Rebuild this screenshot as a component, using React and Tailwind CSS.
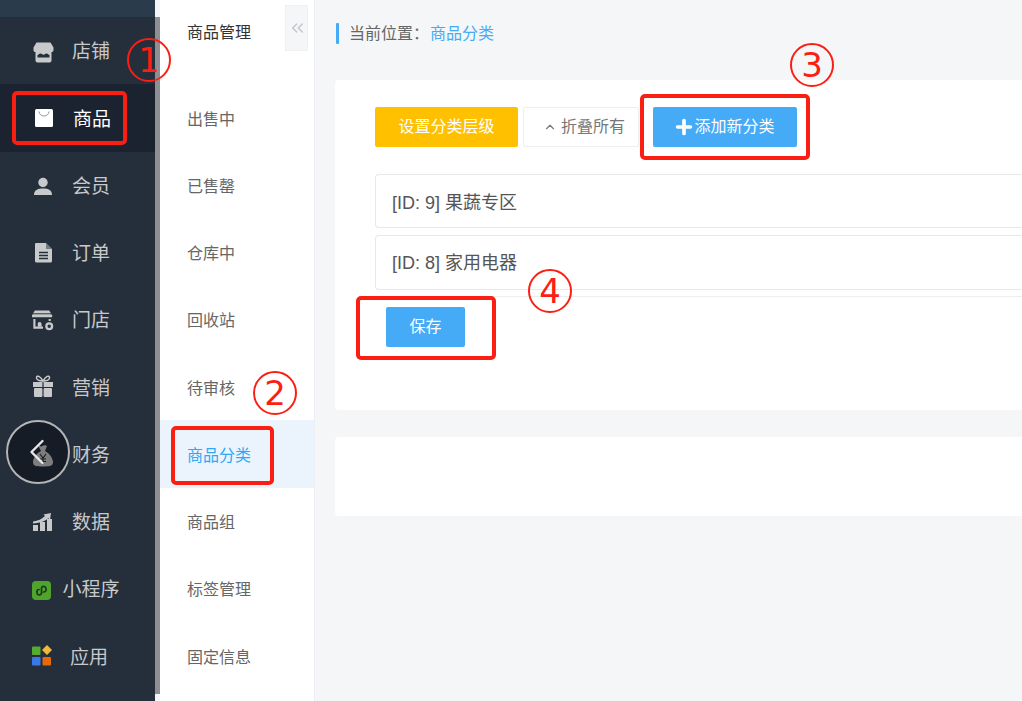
import React from 'react';
import { ChevronLeft, ChevronsLeft, ChevronUp, Plus } from 'lucide-react';

const fontStack = { fontFamily: '"Liberation Sans", "Noto Sans CJK SC", sans-serif' };

const ShopIcon = () => (
  <svg width="22" height="24" viewBox="0 0 22 24" fill="#c8c9cb">
    <g transform="translate(0.500 2.500)">
      <path d="M4 1h14l3 5v3a2 2 0 0 1-2 1.500V19a2 2 0 0 1-2 2H5a2 2 0 0 1-2-2v-8.500A2 2 0 0 1 1 9V6z" />
      <path d="M5 13.500c1 0 1.500-1.500 3-1.500s1.500 1.200 3 1.200S12.500 12 14 12s2 1.500 3 1.500V16H5z" fill="#252f3b" />
    </g>
  </svg>
);

const BagIcon = () => (
  <svg width="22" height="22" viewBox="0 0 22 22">
    <rect x="3" y="2" width="18" height="18" rx="1.500" fill="#fff" />
    <path d="M7 4.500c.5 6 9.500 6 10 0" fill="none" stroke="#8d99a6" strokeWidth="1" />
  </svg>
);

const UserIcon = () => (
  <svg width="22" height="22" viewBox="0 0 22 22" fill="#c8c9cb">
    <circle cx="11" cy="8.500" r="4.700" />
    <path d="M2 21c0-5 3.500-6.500 9-6.500s9 1.500 9 6.500z" />
  </svg>
);

const FileIcon = () => (
  <svg width="22" height="22" viewBox="0 0 22 22">
    <path d="M4 2h10l6 6v12a1.500 1.500 0 0 1-1.500 1.500h-14A1.500 1.500 0 0 1 3 20V3a1 1 0 0 1 1-1z" fill="#c8c9cb" />
    <path d="M14 2v6h6" fill="#252f3b" opacity=".5" />
    <path d="M7 11.500h9M7 14.500h9M7 17.500h9" stroke="#252f3b" strokeWidth="1.300" />
  </svg>
);

const StoreIcon = () => (
  <svg width="23" height="22" viewBox="0 0 23 22">
    <path d="M3 1h15l3 5v2H0V6z" fill="#c8c9cb" />
    <path d="M0 4.500h21" stroke="#252f3b" strokeWidth="1" />
    <path d="M2.500 10v9h9M18.500 10v2" fill="none" stroke="#c8c9cb" strokeWidth="2.200" />
    <path d="M6 15a2 2 0 0 1 4 0v3H6z" fill="#c8c9cb" />
    <circle cx="18" cy="17.500" r="3" fill="none" stroke="#c8c9cb" strokeWidth="2.400" />
  </svg>
);

const GiftIcon = () => (
  <svg width="22" height="23" viewBox="0 0 22 23" fill="#c8c9cb">
    <path d="M11 6C8 1 5 0 4.500 2.500S7 6 11 6c4 0 7-1 6.500-3.500S14 1 11 6z" fill="none" stroke="#c8c9cb" strokeWidth="1.500" />
    <rect x="1" y="7" width="9.400" height="5" />
    <rect x="11.600" y="7" width="9.400" height="5" />
    <rect x="2" y="13" width="8.400" height="9" rx="1" />
    <rect x="11.600" y="13" width="8.400" height="9" rx="1" />
  </svg>
);

const MoneyBagIcon = () => (
  <svg width="22" height="23" viewBox="0 0 22 23">
    <path d="M6 1l3 1.500L13 1l2 1-2 5c4 2 8 7 8 11s-3 4.500-10 4.500S1 22 1 18s4-9 8-11z" fill="#7d7d7d" />
    <path d="M8 10l3 4 3-4M11 14v5M8 15h6M8 17.500h6" fill="none" stroke="#161c25" strokeWidth="1.100" />
  </svg>
);

const ChartIcon = () => (
  <svg width="22" height="22" viewBox="0 0 22 22" fill="#c8c9cb">
    <rect x="1" y="15" width="5" height="6" />
    <rect x="8" y="12" width="5" height="9" />
    <rect x="15" y="9" width="5" height="12" />
    <path d="M1 11.500c5-.5 9-2.500 12-5.500l-1.500-1.500L19 3l-1 7-1.700-1.700C12 12 7 13 1 13.500z" />
  </svg>
);

const MiniIcon = () => (
  <svg width="22" height="22" viewBox="0 0 22 22">
    <rect x="0" y="3" width="19" height="19" rx="4" fill="#4fa52c" />
    <g transform="translate(-2 1)">
      <path d="M7 12.500v1.200a2.300 2.300 0 0 0 4.500.6V9a2.300 2.300 0 0 1 4.500.5V11a2.300 2.300 0 0 1-2.500 2" fill="none" stroke="#1d3a22" strokeWidth="1.700" strokeLinecap="round" />
      <path d="M7 12.500a2 2 0 0 1 2-2" fill="none" stroke="#1d3a22" strokeWidth="1.700" strokeLinecap="round" />
    </g>
  </svg>
);

const AppsIcon = () => (
  <svg width="22" height="22" viewBox="0 0 22 22">
    <rect x="0" y="1.500" width="8.500" height="8.500" rx="1" fill="#57ab2e" />
    <path d="M15 0l5 5-5 5-5-5z" fill="#f3b738" />
    <rect x="0" y="12" width="8.500" height="8.500" rx="1" fill="#3b78e7" />
    <rect x="10.500" y="12" width="8.500" height="8.500" rx="1" fill="#e8690b" />
  </svg>
);

const mainMenu = [
  { label: '店铺', icon: <ShopIcon /> },
  { label: '商品', icon: <BagIcon />, active: true, nudge: 'pl-[2px]' },
  { label: '会员', icon: <UserIcon /> },
  { label: '订单', icon: <FileIcon /> },
  { label: '门店', icon: <StoreIcon /> },
  { label: '营销', icon: <GiftIcon /> },
  { label: '财务', icon: <MoneyBagIcon /> },
  { label: '数据', icon: <ChartIcon /> },
  { label: '小程序', icon: <MiniIcon /> },
  { label: '应用', icon: <AppsIcon />, nudge: 'pr-[4px]' },
];

const subMenu = ['出售中', '已售罄', '仓库中', '回收站', '待审核', '商品分类', '商品组', '标签管理', '固定信息'];

const RedBox = ({ className }) => (
  <div className={`absolute border-[4px] border-[#fb1f13] rounded-[5px] ${className}`} />
);

const Mark = ({ className, children }) => (
  <div className={`absolute w-[44px] h-[44px] rounded-full border-[2.500px] border-[#fb1f13] flex items-center justify-center text-[#fb1f13] text-[34px] leading-none font-['DejaVu_Sans'] ${className}`}>
    {children}
  </div>
);

const App = () => {
  return (
    <div className="relative flex w-[1022px] h-[701px] overflow-hidden bg-[#f5f6f8]" style={fontStack}>
      {/* main menu */}
      <div className="flex flex-col w-[155px] shrink-0 bg-[#252f3b]">
        <div className="h-[17px] bg-[#2a3b4c] shrink-0" />
        {mainMenu.map((item) => (
          <div
            key={item.label}
            className={`flex items-center h-[67.25px] shrink-0 pl-[32px] ${item.active ? 'bg-[#1b2230]' : ''}`}
          >
            <div className="w-[22px] h-[22px] shrink-0 flex items-center">{item.icon}</div>
            <div className={`w-[74px] pt-[4px] text-center text-[19px] ${item.nudge || ''} ${item.active ? 'text-white' : 'text-[#c8c9cb]'}`}>
              {item.label}
            </div>
          </div>
        ))}
      </div>
      <div className="w-[5px] shrink-0 mt-[17px] mb-[7px] bg-[#8d8f92]" />

      {/* sub menu */}
      <div className="relative w-[155px] shrink-0 bg-white border-r border-[#eceef1]">
        <div className="flex items-center h-[66px] pl-[27px] text-[16px] text-[#333]">商品管理</div>
        <div className="pt-[18px]">
          {subMenu.map((name) => (
            <div
              key={name}
              className={`flex items-center h-[67.25px] pl-[27px] pt-[4px] text-[16px] ${name === '商品分类' ? 'bg-[#ebf4fd] text-[#2fa8f5]' : 'text-[#666]'}`}
            >
              {name}
            </div>
          ))}
        </div>
        <div className="absolute left-[125px] top-[5px] w-[23px] h-[46px] flex items-center justify-center bg-[#f5f6f8] border border-[#f0f1f3]">
          <ChevronsLeft size={20} strokeWidth={2} className="text-[#c3c8cf] ml-[2px]" />
        </div>
      </div>

      {/* content */}
      <div className="flex-1 min-w-0 pl-[20px]">
        <div className="flex items-center h-[80px] pb-[13px]">
          <div className="w-[3px] h-[21px] ml-[1px] mr-[10px] bg-[#45abf7] rounded-[1px]" />
          <span className="text-[16px] text-[#666]">当前位置：</span>
          <span className="text-[16px] text-[#45abf7] ml-[1px]">商品分类</span>
        </div>

        <div className="bg-white rounded-l-[4px] h-[330px] pt-[27px] pl-[40px]">
          <div className="flex items-center">
            <button className="w-[143px] h-[40px] rounded-[2px] bg-[#ffc000] text-white text-[16px]">设置分类层级</button>
            <button className="flex items-center justify-center gap-[4px] w-[116px] h-[40px] ml-[5px] pl-[6px] rounded-[2px] bg-white border border-[#eeeeee] text-[#777] text-[16px]">
              <ChevronUp size={14} strokeWidth={2} />
              折叠所有
            </button>
            <button className="flex items-center justify-center w-[144px] h-[40px] ml-[14px] pr-[2px] rounded-[2px] bg-[#45abf7] text-white text-[16px]">
              <Plus size={22} strokeWidth={4} className="-mr-[1px]" />
              添加新分类
            </button>
          </div>

          <div className="mt-[27px] border-b border-[#eeeeee] pb-[6px]">
            <div className="flex items-center h-[54px] pl-[16px] pt-[4px] border border-r-0 border-[#e8e8e8] rounded-l-[4px] text-[18px] text-[#555]">
              [ID: 9] 果蔬专区
            </div>
            <div className="flex items-center h-[55px] mt-[7px] pl-[16px] pt-[1px] border border-r-0 border-[#e8e8e8] rounded-l-[4px] text-[18px] text-[#555]">
              [ID: 8] 家用电器
            </div>
          </div>

          <button className="block w-[79px] h-[40px] mt-[10px] ml-[11px] rounded-[2px] bg-[#45abf7] text-white text-[16px]">保存</button>
        </div>

        <div className="bg-white rounded-l-[4px] h-[79px] mt-[27px]" />
      </div>

      {/* annotations drawn over the screenshot */}
      <RedBox className="left-[12px] top-[91px] w-[115px] h-[54px]" />
      <RedBox className="left-[171px] top-[426px] w-[103px] h-[59px]" />
      <RedBox className="left-[640px] top-[94px] w-[170px] h-[66px]" />
      <RedBox className="left-[356px] top-[296px] w-[140px] h-[64px]" />
      <Mark className="left-[127px] top-[38px]">1</Mark>
      <Mark className="left-[253px] top-[371px]">2</Mark>
      <Mark className="left-[790px] top-[43px]">3</Mark>
      <Mark className="left-[528px] top-[269px]">4</Mark>

      {/* floating back button */}
      <div className="absolute left-[6px] top-[420px] w-[64px] h-[64px] rounded-full bg-[#161c25] border-2 border-[#b3b5b7]" />
      <div className="absolute left-[32px] top-[444px] w-[22px] h-[23px]"><MoneyBagIcon /></div>
      <ChevronLeft size={44} strokeWidth={1.300} className="absolute left-[14.500px] top-[430px] text-[#e8e8e8]" />
    </div>
  );
};

export default App;
